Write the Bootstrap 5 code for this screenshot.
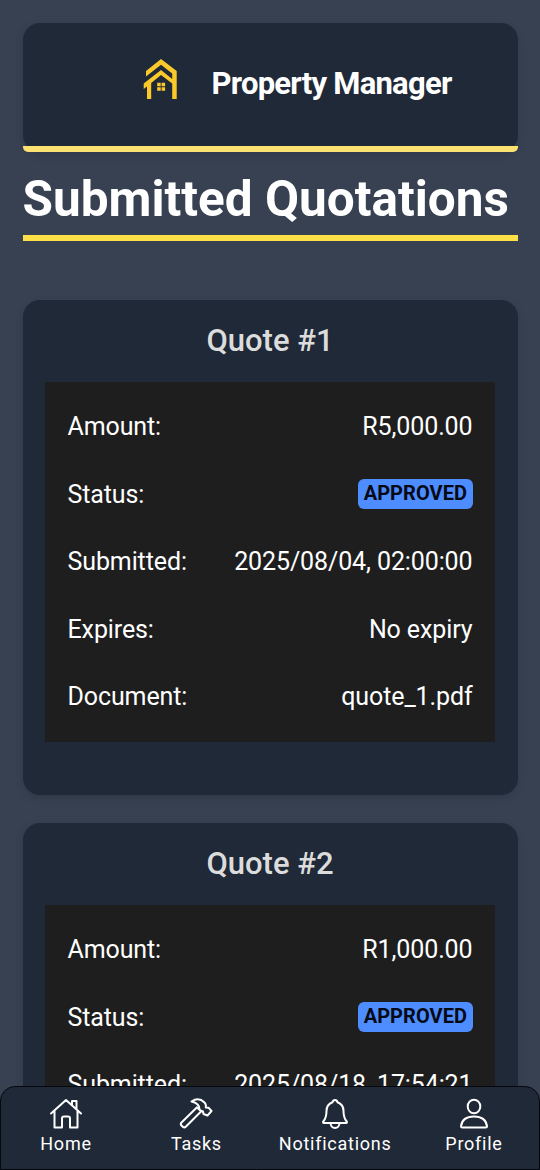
<!DOCTYPE html>
<html lang="en">
<head>
<meta charset="utf-8">
<meta name="viewport" content="width=device-width, initial-scale=1">
<title>Property Manager</title>
<link href="https://cdn.jsdelivr.net/npm/bootstrap@5.3.0/dist/css/bootstrap.min.css" rel="stylesheet">
<style>
  html, body { height: 100%; overflow: hidden; }
  body { background: #374151; color: #fff; font-family: Roboto, sans-serif; font-size: 25px; line-height: 37.5px; }
  .page { height: 100%; overflow: hidden; padding: 22.5px 22.5px 0; }
  .panel { background: #1f2937; border-radius: 17px; box-shadow: 0 3px 9px rgba(0,0,0,.12); }
  .brand { height: 129.5px; padding: 0 66px 7px 120px; }
  .brand::after { content: ""; position: absolute; left: 0; right: 0; bottom: 0; height: 6px; background: #fde272; border-radius: 0 0 5px 5px; }
  .brand-logo { margin-top: -7.5px; }
  .brand-name { font-size: 31px; font-weight: 700; letter-spacing: -.75px; line-height: 38px; }
  .page-title { height: 89px; border-bottom: 6px solid #fde047; font-size: 49.5px; font-weight: 700; line-height: 94px; margin-bottom: 59px; }
  .quote { height: 495px; padding: 0 22.5px; margin-bottom: 28px; }
  .quote h2 { font-size: 31px; font-weight: 500; line-height: 36px; padding: 22.5px 0 23.5px; color: #dcdcdc; }
  .details { background: #1e1e1e; padding: 11.25px 22.5px; letter-spacing: -.11px; }
  .details > div { height: 67.5px; }
  .status { background: #4d8dff; color: #050a14; font-size: 20px; font-weight: 700; letter-spacing: .05px; line-height: 20px; height: 30px; padding: 4px 5.5px 6px 6px; border-radius: 6px; margin-top: -.5px; }
  .tabs { height: 84.5px; background: #1f2937; border: 1.5px solid #05080c; border-radius: 15px 15px 0 0; padding: 10.5px 17px 0; }
  .tabs a { min-width: 96px; color: #fff; font-size: 18px; line-height: 24px; letter-spacing: .75px; }
  .tabs svg { width: 34px; height: 34px; margin-bottom: 1px; fill: none; stroke: currentColor; stroke-width: 2; stroke-linejoin: round; stroke-linecap: round; }
</style>
</head>
<body>
<main class="page">
  <header class="panel brand position-relative d-flex align-items-center justify-content-between">
    <svg class="brand-logo" width="36" height="44" viewBox="0 0 36 44" fill="#fcc92b">
      <path d="M3 13 18 1 33.7 13V41H29.2V25.5L18 17 8.2 25V41H4V28.5L.7 31V25.5L18 12 29.2 21V15.5L18 6.7 3 18.6Z"/>
      <path d="M14.2 24.7h3.5v3.5h-3.5zM18.6 24.7h3.5v3.5h-3.5zM14.2 29.3h3.5v3.5h-3.5zM18.6 29.3h3.5v3.5h-3.5z"/>
    </svg>
    <div class="brand-name text-nowrap">Property Manager</div>
  </header>
  <h1 class="page-title text-nowrap">Submitted Quotations</h1>

  <section class="panel quote">
    <h2 class="text-center m-0">Quote #1</h2>
    <div class="details">
      <div class="d-flex justify-content-between align-items-center"><span>Amount:</span><span>R5,000.00</span></div>
      <div class="d-flex justify-content-between align-items-center"><span>Status:</span><span class="status">APPROVED</span></div>
      <div class="d-flex justify-content-between align-items-center"><span>Submitted:</span><span>2025/08/04, 02:00:00</span></div>
      <div class="d-flex justify-content-between align-items-center"><span>Expires:</span><span>No expiry</span></div>
      <div class="d-flex justify-content-between align-items-center"><span>Document:</span><span>quote_1.pdf</span></div>
    </div>
  </section>

  <section class="panel quote">
    <h2 class="text-center m-0">Quote #2</h2>
    <div class="details">
      <div class="d-flex justify-content-between align-items-center"><span>Amount:</span><span>R1,000.00</span></div>
      <div class="d-flex justify-content-between align-items-center"><span>Status:</span><span class="status">APPROVED</span></div>
      <div class="d-flex justify-content-between align-items-center"><span>Submitted:</span><span>2025/08/18, 17:54:21</span></div>
    </div>
  </section>
</main>

<nav class="tabs fixed-bottom d-flex justify-content-between align-items-start">
  <a href="#" class="d-flex flex-column align-items-center text-decoration-none">
    <svg viewBox="0 0 34 34"><path d="M2 16.5 17 3 32 16.5M5.500 14V30.500H13V21.500q0-2 2-2h4q2 0 2 2v9h7.500V14M23 8V4h4.500v8"/></svg>
    Home
  </a>
  <a href="#" class="d-flex flex-column align-items-center text-decoration-none">
    <svg viewBox="0 0 34 34"><path d="M12.500 4.500C17 1.500 22 2 25.500 5.500Q27.500 7.500 26.700 10.500L29.500 10.700 32.500 14 28.500 18.500 24.500 17 24 14.500 20.500 13Q21 6.500 12.500 4.500ZM17.800 10.500 2.500 25.500Q1 27 2.500 28.500L4 30Q5.500 31 7 29.500L22.500 14M17.800 10.500 21.500 13.500"/></svg>
    Tasks
  </a>
  <a href="#" class="d-flex flex-column align-items-center text-decoration-none">
    <svg viewBox="0 0 34 34"><path d="M17 3q-2 0-2.500 2.300Q8.500 7.500 8.500 14C8.500 20.500 7 22.500 5.300 24.500Q4.500 26 6 26H28Q29.500 26 28.700 24.500C27 22.500 25.500 20.500 25.500 14Q25.500 7.500 19.500 5.300 19 3 17 3ZM12.500 26a4.500 5 0 0 0 9 0"/></svg>
    Notifications
  </a>
  <a href="#" class="d-flex flex-column align-items-center text-decoration-none">
    <svg viewBox="0 0 34 34"><ellipse cx="17" cy="9.500" rx="6.300" ry="6.800"/><path d="M5.500 30.500Q4 30.500 4 29C5 22.500 10 19.500 17 19.500S29 22.500 30 29Q30 30.500 28.500 30.500Z"/></svg>
    Profile
  </a>
</nav>
<script src="https://cdn.jsdelivr.net/npm/bootstrap@5.3.0/dist/js/bootstrap.bundle.min.js"></script>
</body>
</html>
